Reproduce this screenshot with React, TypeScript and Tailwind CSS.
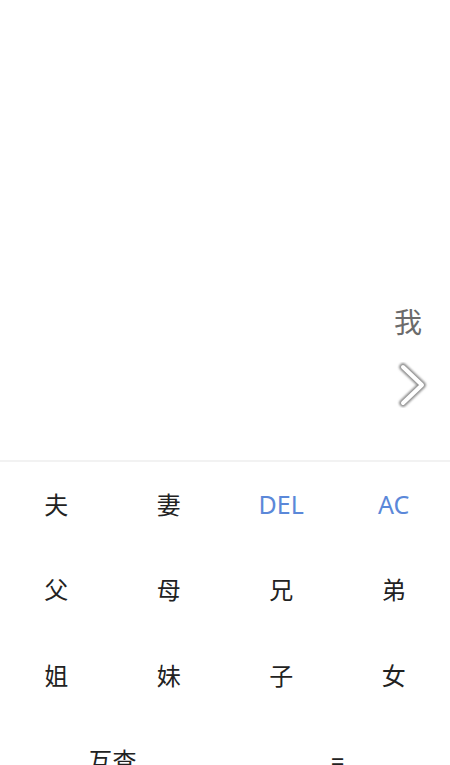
const rows: { label: string; blue?: boolean }[][] = [
  [{ label: "夫" }, { label: "妻" }, { label: "DEL", blue: true }, { label: "AC", blue: true }],
  [{ label: "父" }, { label: "母" }, { label: "兄" }, { label: "弟" }],
  [{ label: "姐" }, { label: "妹" }, { label: "子" }, { label: "女" }],
];

function Chevron() {
  return (
    <svg width="34" height="46" viewBox="0 0 34 46" className="block">
      <defs>
        <filter id="soft" x="-50%" y="-50%" width="200%" height="200%">
          <feGaussianBlur stdDeviation="1.2" />
        </filter>
      </defs>
      {/* grey halo */}
      <polyline
        points="7,5 26,23 7,41"
        fill="none"
        stroke="#8c8c8c"
        strokeWidth="7.5"
        strokeLinecap="round"
        strokeLinejoin="round"
        filter="url(#soft)"
      />
      <polyline
        points="7,5 26,23 7,41"
        fill="none"
        stroke="#ffffff"
        strokeWidth="4"
        strokeLinecap="round"
        strokeLinejoin="round"
      />
    </svg>
  );
}

export default function App() {
  return (
    <div
      className="w-[450px] h-[765px] overflow-hidden bg-white flex flex-col"
      style={{ fontFamily: '"Noto Sans", "Noto Sans CJK SC", sans-serif' }}
    >
      {/* Display */}
      <div className="h-[460px] shrink-0 flex flex-col items-end pr-[24px] pt-[302px]">
        <div className="text-[28px] leading-[40px] text-[#6b6b6b] pr-[4px]">我</div>
        <div className="mt-[20px] mr-[-4px]">
          <Chevron />
        </div>
      </div>

      <div className="h-[2px] shrink-0 bg-[#f2f2f2]" />

      {/* Keypad */}
      <div className="flex flex-col shrink-0">
        {rows.map((row, i) => (
          <div key={i} className="grid grid-cols-4 h-[85.5px]">
            {row.map((key) => (
              <button
                key={key.label}
                className={`flex items-center justify-center ${
                  key.blue ? "text-[#5b88d9] text-[25px]" : "text-[24px] text-[#222222]"
                }`}
              >
                {key.label}
              </button>
            ))}
          </div>
        ))}
        <div className="grid grid-cols-2 h-[85.5px]">
          <button className="flex items-center justify-center text-[24px] text-[#222222]">
            互查
          </button>
          <button className="flex items-center justify-center text-[24px] text-[#222222]">
            =
          </button>
        </div>
      </div>
    </div>
  );
}
